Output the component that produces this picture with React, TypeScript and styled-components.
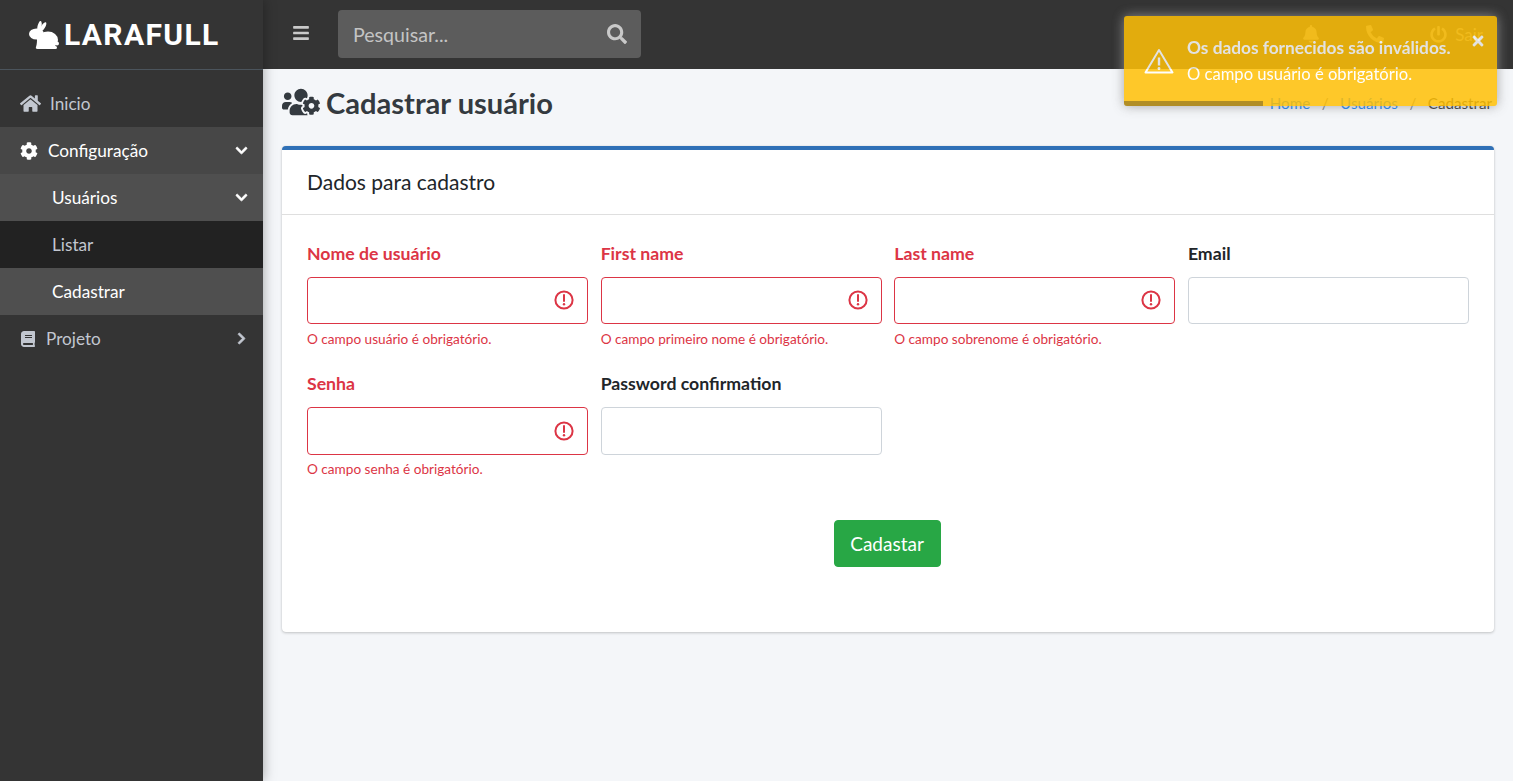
import React from 'react'
import styled, { createGlobalStyle } from 'styled-components'
import {
  FaBars,
  FaBell,
  FaBook,
  FaChevronDown,
  FaChevronRight,
  FaCog,
  FaHome,
  FaPhoneAlt,
  FaPowerOff,
  FaSearch,
  FaTimes,
  FaUsersCog,
} from 'react-icons/fa'

const GlobalStyle = createGlobalStyle`
  html, body {
    margin: 0;
    padding: 0;
    height: 100%;
    overflow: hidden;
    font-family: 'Lato', 'Liberation Sans', sans-serif;
    background: #f4f6f9;
    color: #212529;
  }
  * {
    box-sizing: border-box;
  }
`

const Page = styled.div`
  display: grid;
  grid-template-columns: 263px 1fr;
  height: 781px;
`

const Sidebar = styled.aside`
  display: flex;
  flex-direction: column;
  background: #343434;
  box-shadow: 0 0 12px rgba(0, 0, 0, 0.35);
  position: relative;
  z-index: 2;
`

const Brand = styled.div`
  display: flex;
  align-items: center;
  gap: 5px;
  height: 70px;
  padding: 0 0 0 29px;
  border-bottom: 1px solid #4b545c;
  margin-bottom: 10px;
  color: #fff;
`

const BrandText = styled.span`
  font-family: 'Roboto', 'Liberation Sans', sans-serif;
  font-weight: 700;
  font-size: 30px;
  line-height: 1;
  letter-spacing: 1.35px;
`

const NavRow = styled.div<{ $tone?: 'open' | 'sub' | 'dark'; $indent?: number; $bright?: boolean }>`
  display: flex;
  align-items: center;
  height: 47px;
  padding: 0 15px 0 ${(p) => p.$indent ?? 20}px;
  font-size: 17.2px;
  color: ${(p) => (p.$bright ? '#fff' : '#c2c7d0')};
  background: ${(p) =>
    p.$tone === 'open' ? '#474747' : p.$tone === 'sub' ? '#4f4f4f' : p.$tone === 'dark' ? '#222222' : 'transparent'};
`

const NavIcon = styled.span<{ $gap: number; $size: number }>`
  display: flex;
  margin-right: ${(p) => p.$gap}px;
  font-size: ${(p) => p.$size}px;
`

const NavCaret = styled.span`
  display: flex;
  margin-left: auto;
  font-size: 13px;

  svg {
    stroke: currentColor;
    stroke-width: 30;
  }
`

const Main = styled.div`
  display: flex;
  flex-direction: column;
  min-width: 0;
`

const Topbar = styled.header`
  display: flex;
  align-items: center;
  height: 69px;
  padding: 0 30px 1px 29px;
  background: #343434;
  color: #c9c9c9;
  flex: none;
`

const MenuToggle = styled.span`
  display: flex;
  font-size: 18px;
  margin-top: -3px;
  margin-right: 28px;
`

const SearchBox = styled.div`
  display: flex;
  align-items: center;
  justify-content: space-between;
  width: 303px;
  height: 48px;
  padding: 0 14px 0 15px;
  background: #5c5c5c;
  border-radius: 4px;
  font-size: 19.6px;
  color: #c4c4c4;
`

const SearchIcon = styled.span`
  display: flex;
  font-size: 20px;
  color: #c9c9c9;
`

const TopActions = styled.div`
  display: flex;
  align-items: center;
  gap: 46px;
  margin-left: auto;
  font-size: 18px;
  color: #999;
`

const LogoutLink = styled.span`
  display: flex;
  align-items: center;
  gap: 8px;
  font-size: 17px;
`

const Content = styled.main`
  flex: 1;
  padding: 0 19px;
  overflow: hidden;
`

const TitleRow = styled.div`
  display: flex;
  align-items: center;
  justify-content: space-between;
  height: 70px;
  padding-bottom: 2px;
  margin-bottom: 7px;
`

const PageTitle = styled.h1`
  display: flex;
  align-items: center;
  gap: 6px;
  margin: 0 0 2px;
  font-size: 29.1px;
  font-weight: 700;
  color: #343a40;
`

const Breadcrumb = styled.div`
  display: flex;
  gap: 11.5px;
  padding-right: 2px;
  font-size: 15.2px;
  color: #6c757d;
`

const Crumb = styled.span<{ $link?: boolean }>`
  color: ${(p) => (p.$link ? '#007bff' : '#212529')};
`

const Card = styled.section`
  height: 486px;
  background: #fff;
  border-top: 4px solid #2f70b7;
  border-radius: 4px;
  box-shadow: 0 0 1px rgba(0, 0, 0, 0.13), 0 1px 3px rgba(0, 0, 0, 0.2);
`

const CardHeader = styled.div`
  display: flex;
  align-items: center;
  height: 65px;
  padding: 0 25px 1px;
  border-bottom: 1px solid rgba(0, 0, 0, 0.125);
  font-size: 21px;
  color: #212529;
`

const Form = styled.form`
  padding: 24.6px 25px 0;
`

const FieldGrid = styled.div`
  display: grid;
  grid-template-columns: repeat(4, 1fr);
  grid-template-rows: 130.5px 130.5px;
  column-gap: 12.5px;
  align-items: start;
`

const Label = styled.label<{ $error?: boolean }>`
  display: flex;
  align-items: center;
  height: 27px;
  margin-bottom: 10px;
  font-size: 17.7px;
  font-weight: 700;
  color: ${(p) => (p.$error ? '#dc3545' : '#212529')};
`

const InputWrap = styled.div`
  position: relative;
`

const Input = styled.input<{ $error?: boolean }>`
  display: block;
  width: 100%;
  height: 47.5px;
  border: 1px solid ${(p) => (p.$error ? '#dc3545' : '#ced4da')};
  border-radius: 4px;
  background: #fff;
  outline: none;
`

const ErrorBadge = styled.svg`
  position: absolute;
  top: 13.5px;
  right: 14px;
  width: 20px;
  height: 20px;
`

const ErrorText = styled.div`
  margin-top: 6.5px;
  font-size: 13.6px;
  line-height: 16px;
  color: #dc3545;
`

const Actions = styled.div`
  display: flex;
  justify-content: center;
  padding-right: 2px;
  margin-top: 19.6px;
`

const SubmitButton = styled.button`
  width: 107px;
  height: 47px;
  border: 1px solid #28a745;
  border-radius: 4px;
  background: #28a745;
  color: #fff;
  font-family: inherit;
  font-size: 19px;
`

const Toast = styled.div`
  position: fixed;
  top: 16px;
  left: 1124px;
  width: 373px;
  height: 90px;
  display: flex;
  align-items: center;
  padding: 0 0 0 20px;
  background: #ffc107;
  border-radius: 3px;
  color: #fff;
  opacity: 0.86;
  box-shadow: 0 0 12px #999;
  z-index: 10;
`

const ToastIcon = styled.svg`
  flex: none;
  width: 30px;
  height: 26px;
  margin-right: 13px;
`

const ToastTitle = styled.div`
  font-size: 17.3px;
  font-weight: 700;
  line-height: 26px;
  white-space: nowrap;
`

const ToastBody = styled.div`
  font-size: 16.6px;
  line-height: 26px;
`

const ToastClose = styled.span`
  position: absolute;
  top: 17px;
  right: 11px;
  display: flex;
  font-size: 16px;
`

const ToastProgress = styled.div`
  position: absolute;
  left: 0;
  bottom: 0;
  height: 5px;
  background: rgba(0, 0, 0, 0.35);
  border-bottom-left-radius: 3px;
`

const RabbitLogo = () => (
  <svg width="30" height="28" viewBox="0 0 30 28" fill="#fff">
    <ellipse cx="10.5" cy="5.5" rx="2" ry="5.5" transform="rotate(12 10.5 5.5)" />
    <ellipse cx="14" cy="6" rx="2" ry="5.5" transform="rotate(32 14 6)" />
    <ellipse cx="7.5" cy="13" rx="7.5" ry="5.5" />
    <ellipse cx="19" cy="19" rx="10" ry="8.5" />
    <path d="M8 17h8v8h3c1.500 0 2 1 2 1.500S20.500 28 19 28H8.500C7 28 6.500 27 7 26c1-3 1-6 1-9z" />
    <circle cx="28" cy="22.500" r="2" />
    <rect x="14" y="25" width="14" height="3" rx="1.500" />
  </svg>
)

const ErrorIcon = () => (
  <ErrorBadge viewBox="0 0 20 20" fill="none">
    <circle cx="10" cy="10" r="8.6" stroke="#dc3545" strokeWidth="2" />
    <path d="M10 5v6" stroke="#dc3545" strokeWidth="2" strokeLinecap="round" />
    <circle cx="10" cy="14.3" r="1.2" fill="#dc3545" />
  </ErrorBadge>
)

type Field = { label: string; error?: string }

const fields: Field[] = [
  { label: 'Nome de usuário', error: 'O campo usuário é obrigatório.' },
  { label: 'First name', error: 'O campo primeiro nome é obrigatório.' },
  { label: 'Last name', error: 'O campo sobrenome é obrigatório.' },
  { label: 'Email' },
  { label: 'Senha', error: 'O campo senha é obrigatório.' },
  { label: 'Password confirmation' },
]

export default function App() {
  return (
    <>
      <GlobalStyle />
      <Page>
        <Sidebar>
          <Brand>
            <RabbitLogo />
            <BrandText>LARAFULL</BrandText>
          </Brand>
          <NavRow>
            <NavIcon $gap={9} $size={21}>
              <FaHome />
            </NavIcon>
            Inicio
          </NavRow>
          <NavRow $tone="open" $bright>
            <NavIcon $gap={10} $size={18}>
              <FaCog />
            </NavIcon>
            Configuração
            <NavCaret>
              <FaChevronDown />
            </NavCaret>
          </NavRow>
          <NavRow $tone="sub" $bright $indent={52}>
            Usuários
            <NavCaret>
              <FaChevronDown />
            </NavCaret>
          </NavRow>
          <NavRow $tone="dark" $indent={52}>
            Listar
          </NavRow>
          <NavRow $tone="sub" $bright $indent={52}>
            Cadastrar
          </NavRow>
          <NavRow>
            <NavIcon $gap={10} $size={16}>
              <FaBook />
            </NavIcon>
            Projeto
            <NavCaret>
              <FaChevronRight />
            </NavCaret>
          </NavRow>
        </Sidebar>
        <Main>
          <Topbar>
            <MenuToggle>
              <FaBars />
            </MenuToggle>
            <SearchBox>
              Pesquisar...
              <SearchIcon>
                <FaSearch />
              </SearchIcon>
            </SearchBox>
            <TopActions>
              <FaBell />
              <FaPhoneAlt />
              <LogoutLink>
                <FaPowerOff />
                Sair
              </LogoutLink>
            </TopActions>
          </Topbar>
          <Content>
            <TitleRow>
              <PageTitle>
                <FaUsersCog size={38} />
                Cadastrar usuário
              </PageTitle>
              <Breadcrumb>
                <Crumb $link>Home</Crumb>/<Crumb $link>Usuários</Crumb>/<Crumb>Cadastrar</Crumb>
              </Breadcrumb>
            </TitleRow>
            <Card>
              <CardHeader>Dados para cadastro</CardHeader>
              <Form>
                <FieldGrid>
                  {fields.map((field) => (
                    <div key={field.label}>
                      <Label $error={!!field.error}>{field.label}</Label>
                      <InputWrap>
                        <Input $error={!!field.error} />
                        {field.error && <ErrorIcon />}
                      </InputWrap>
                      {field.error && <ErrorText>{field.error}</ErrorText>}
                    </div>
                  ))}
                </FieldGrid>
                <Actions>
                  <SubmitButton type="button">Cadastar</SubmitButton>
                </Actions>
              </Form>
            </Card>
          </Content>
        </Main>
      </Page>
      <Toast>
        <ToastIcon viewBox="0 0 30 26" fill="none">
          <path d="M15 2 L28.5 24.5 H1.5 Z" stroke="#fff" strokeWidth="2" strokeLinejoin="round" />
          <path d="M15 9.5v8" stroke="#fff" strokeWidth="2.4" />
          <circle cx="15" cy="20.5" r="1.4" fill="#fff" />
        </ToastIcon>
        <div>
          <ToastTitle>Os dados fornecidos são inválidos.</ToastTitle>
          <ToastBody>O campo usuário é obrigatório.</ToastBody>
        </div>
        <ToastClose>
          <FaTimes />
        </ToastClose>
        <ToastProgress style={{ width: `${(139 / 373) * 100}%` }} />
      </Toast>
    </>
  )
}
